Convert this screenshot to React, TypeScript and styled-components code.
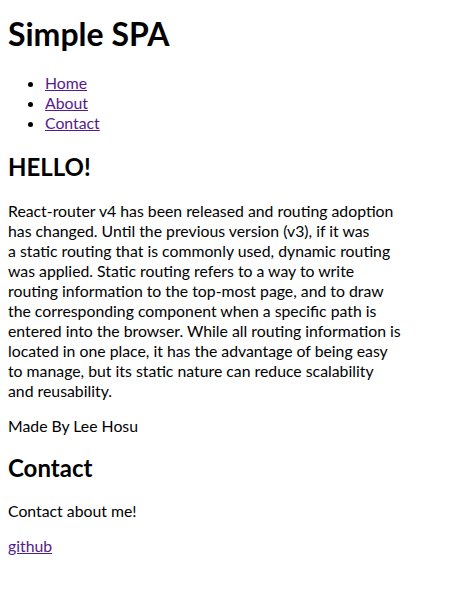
import React from "react";
import styled, { createGlobalStyle } from "styled-components";

const GlobalStyle = createGlobalStyle`
  html, body { margin: 0; padding: 0; background: #ffffff; }
  body {
    font-family: Lato, "Noto Sans CJK KR", sans-serif;
    color: #000000;
  }
`;

const Page = styled.div`
  display: flex;
  flex-direction: column;
  align-items: flex-start;
  padding: 0 8px;
`;

const Title = styled.h1`
  margin: 14px 0 0;
  font-size: 32px;
  line-height: 40px;
  font-weight: 700;
`;

const Nav = styled.ul`
  margin: 19px 0 0;
  padding-left: 37px;
  list-style: disc;
  font-size: 15.8px;
  line-height: 20px;
`;

const NavItem = styled.li``;

const Link = styled.a`
  color: #551a8b;
  text-decoration: underline;
`;

const Heading = styled.h2<{ $gap: number }>`
  margin: ${(p) => p.$gap}px 0 0;
  font-size: 24px;
  line-height: 30px;
  font-weight: 700;
`;

const Text = styled.p<{ $gap: number }>`
  margin: ${(p) => p.$gap}px 0 0;
  font-size: 15.8px;
  line-height: 20px;
  max-width: 420px;
`;

const intro = [
  "React-router v4 has been released and routing adoption",
  "has changed. Until the previous version (v3), if it was",
  "a static routing that is commonly used, dynamic routing",
  "was applied. Static routing refers to a way to write",
  "routing information to the top-most page, and to draw",
  "the corresponding component when a specific path is",
  "entered into the browser. While all routing information is",
  "located in one place, it has the advantage of being easy",
  "to manage, but its static nature can reduce scalability",
  "and reusability.",
];

export default function App() {
  return (
    <>
      <GlobalStyle />
      <Page>
        <Title>Simple SPA</Title>
        <Nav>
          <NavItem>
            <Link href="#/">Home</Link>
          </NavItem>
          <NavItem>
            <Link href="#/about">About</Link>
          </NavItem>
          <NavItem>
            <Link href="#/contact">Contact</Link>
          </NavItem>
        </Nav>
        <Heading $gap={19}>HELLO!</Heading>
        <Text $gap={19}>
          {intro.map((line, i) => (
            <React.Fragment key={i}>
              {i > 0 && <br />}
              {line}
            </React.Fragment>
          ))}
        </Text>
        <Text $gap={15}>Made By Lee Hosu</Text>
        <Heading $gap={17}>Contact</Heading>
        <Text $gap={18}>Contact about me!</Text>
        <Text $gap={15}>
          <Link href="#/github">github</Link>
        </Text>
      </Page>
    </>
  );
}
